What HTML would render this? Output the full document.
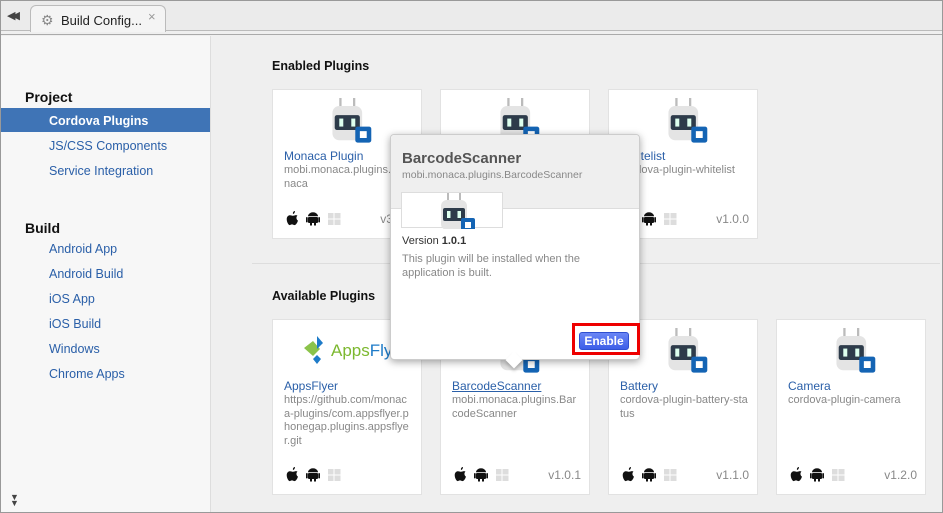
<!DOCTYPE html>
<html><head><style>
*{margin:0;padding:0;box-sizing:border-box}
body{width:943px;height:513px;overflow:hidden;font-family:"Liberation Sans",sans-serif;background:#efefef;position:relative}
.frame{position:absolute;left:0;top:0;width:943px;height:513px;border:1px solid #999;pointer-events:none;z-index:10}
.tabbar{position:absolute;left:0;top:0;width:943px;height:31px;background:#ebebeb;border-bottom:1px solid #bbb}
.tabline{position:absolute;left:0;top:34px;width:943px;height:1px;background:#aaa}
.tab{position:absolute;left:30px;top:5px;width:136px;height:27px;background:#f4f4f4;border:1px solid #bbb;border-bottom:none;border-radius:6px 6px 0 0;font-size:13px;color:#222;padding:7px 0 0 30px}
.side{position:absolute;left:1px;top:36px;width:210px;height:476px;background:#f7f7f7;border-right:1px solid #ddd}
.side h3{position:absolute;left:24px;font-size:14px;font-weight:bold;color:#111}
.side a{position:absolute;left:48px;font-size:12.5px;color:#2a5fa8}
.sel{position:absolute;left:0;top:72px;width:209px;height:24px;background:#3f74b6}
.main h2{position:absolute;font-size:12.5px;font-weight:bold;color:#111;left:272px}
.card{position:absolute;width:150px;background:#fff;border:1px solid #e2e2e2}
.card .t{position:absolute;left:11px;font-size:12px;color:#2a5fa8}
.card .d{position:absolute;left:11px;width:128px;font-size:11px;color:#888;line-height:13.5px;word-break:break-all}
.card .os{position:absolute;left:13px;bottom:12px}
.card .v{position:absolute;right:8px;bottom:12px;font-size:12px;color:#888}
.pl{position:absolute;left:57px;top:8px}
.pop{position:absolute;left:390px;top:134px;width:250px;height:226px;background:#fff;border:1px solid #ccc;border-radius:4px;box-shadow:0 2px 8px rgba(0,0,0,.35);z-index:5}
</style></head><body>
<div class="tabbar"></div><div class="tabline"></div>
<div style="position:absolute;left:7px;top:9px;font-size:11px;color:#444;letter-spacing:-4px">◀◀</div>
<div class="tab"><span style="position:absolute;left:10px;top:6px;color:#888;font-size:14px">⚙</span>Build Config...<span style="position:absolute;left:117px;top:3px;color:#999">×</span></div>
<div class="side">
<h3 style="top:53px">Project</h3>
<div class="sel"></div>
<a style="top:78px;color:#fff;font-weight:bold">Cordova Plugins</a>
<a style="top:103px">JS/CSS Components</a>
<a style="top:128px">Service Integration</a>
<h3 style="top:184px">Build</h3>
<a style="top:206px">Android App</a>
<a style="top:231px">Android Build</a>
<a style="top:256px">iOS App</a>
<a style="top:281px">iOS Build</a>
<a style="top:306px">Windows</a>
<a style="top:331px">Chrome Apps</a>
<div style="position:absolute;left:9px;top:458px;font-size:9px;color:#444;line-height:6px">▼<br>▼</div>
</div>
<div class="main">
<h2 style="top:59px">Enabled Plugins</h2>
<div style="position:absolute;left:252px;top:263px;width:688px;height:1px;background:#ddd"></div>
<h2 style="top:289px">Available Plugins</h2>
</div>
<svg width="0" height="0" style="position:absolute"><defs>
<g id="plug"><rect x="8" y="0" width="2" height="8" fill="#bbb"/><rect x="20" y="0" width="2" height="8" fill="#bbb"/><rect x="2" y="7" width="26" height="30" rx="6" fill="#e4e4e4"/><rect x="4" y="15" width="22" height="13" rx="2" fill="#2d3b4a"/><rect x="8" y="18" width="3.5" height="7" fill="#dfe"/><rect x="18.5" y="18" width="3.5" height="7" fill="#dfe"/><rect x="22" y="25" width="14" height="14" rx="2" fill="#1464b4"/><rect x="26" y="29" width="6" height="6" fill="#fff"/></g>
<g id="os"><path d="M7 3c1 0 2-1.5 2-3-1 0-2.5 1-2 3zM2 5c2-1.5 3.5-.2 5-.2s2.5-1.3 4.5-.2c-1.5 1-1.5 4 .5 5-1 3-2.5 4.5-3.5 4.5s-1.3-.7-2.5-.7-1.5.7-2.5.7C2 14-1 7.5 2 5z" fill="#111"/><g transform="translate(20,1)"><rect x="2" y="5" width="10" height="6" rx="1" fill="#111"/><path d="M2 4.3a5 4 0 0 1 10 0z" fill="#111"/><rect x="0" y="5" width="1.7" height="5.5" rx=".85" fill="#111"/><rect x="12.3" y="5" width="1.7" height="5.5" rx=".85" fill="#111"/><rect x="4" y="10" width="2" height="3.5" fill="#111"/><rect x="8" y="10" width="2" height="3.5" fill="#111"/></g><g transform="translate(42,2)" fill="#ddd"><rect x="0" y="0" width="5.5" height="5.5"/><rect x="6.5" y="0" width="6" height="5.5"/><rect x="0" y="6.5" width="5.5" height="5.5"/><rect x="6.5" y="6.5" width="6" height="5.5"/></g></g>
</defs></svg>
<!-- enabled -->
<div class="card" style="left:272px;top:89px;height:150px"><svg class="pl" width="46" height="48" viewBox="0 0 40 42"><use href="#plug"/></svg><div class="t" style="top:59px">Monaca Plugin</div><div class="d" style="top:74px">mobi.monaca.plugins.Monaca</div><svg class="os" width="60" height="15"><use href="#os"/></svg><div class="v">v3.0.0</div></div>
<div class="card" style="left:440px;top:89px;height:150px"><svg class="pl" width="46" height="48" viewBox="0 0 40 42"><use href="#plug"/></svg></div>
<div class="card" style="left:608px;top:89px;height:150px"><svg class="pl" width="46" height="48" viewBox="0 0 40 42"><use href="#plug"/></svg><div class="t" style="top:59px">Whitelist</div><div class="d" style="top:74px">cordova-plugin-whitelist</div><svg class="os" width="60" height="15"><use href="#os"/></svg><div class="v">v1.0.0</div></div>
<!-- available -->
<div class="card" style="left:272px;top:319px;height:176px"><div style="position:absolute;left:31px;top:16px;"><svg width="30" height="30"><path d="M0 12l9-7 7 8-7 7z" fill="#8bc34a"/><path d="M13 0l6 7-6 6z" fill="#1e7bc8"/><path d="M13 19l4 4-4 5-4-5z" fill="#1e7bc8"/></svg></div><div style="position:absolute;left:58px;top:21px;font-size:17px;color:#7cb82f">Apps<span style="color:#1e7bc8">Flyer</span></div><div class="t" style="top:59px">AppsFlyer</div><div class="d" style="top:74px">https://github.com/monaca-plugins/com.appsflyer.phonegap.plugins.appsflyer.git</div><svg class="os" width="60" height="15"><use href="#os"/></svg></div>
<div class="card" style="left:440px;top:319px;height:176px"><svg class="pl" width="46" height="48" viewBox="0 0 40 42"><use href="#plug"/></svg><div class="t" style="top:59px;text-decoration:underline">BarcodeScanner</div><div class="d" style="top:74px">mobi.monaca.plugins.BarcodeScanner</div><svg class="os" width="60" height="15"><use href="#os"/></svg><div class="v">v1.0.1</div></div>
<div class="card" style="left:608px;top:319px;height:176px"><svg class="pl" width="46" height="48" viewBox="0 0 40 42"><use href="#plug"/></svg><div class="t" style="top:59px">Battery</div><div class="d" style="top:74px">cordova-plugin-battery-status</div><svg class="os" width="60" height="15"><use href="#os"/></svg><div class="v">v1.1.0</div></div>
<div class="card" style="left:776px;top:319px;height:176px"><svg class="pl" width="46" height="48" viewBox="0 0 40 42"><use href="#plug"/></svg><div class="t" style="top:59px">Camera</div><div class="d" style="top:74px">cordova-plugin-camera</div><svg class="os" width="60" height="15"><use href="#os"/></svg><div class="v">v1.2.0</div></div>
<!-- popover -->
<div class="pop">
<div style="position:absolute;left:0;top:0;width:248px;height:74px;background:#efefef;border-bottom:1px solid #ddd;border-radius:4px 4px 0 0"></div>
<div style="position:absolute;left:11px;top:15px;font-size:15px;font-weight:bold;color:#555">BarcodeScanner</div>
<div style="position:absolute;left:11px;top:34px;font-size:10.5px;color:#888">mobi.monaca.plugins.BarcodeScanner</div>
<div style="position:absolute;left:10px;top:57px;width:102px;height:36px;background:#fff;border:1px solid #ddd"><svg style="position:absolute;left:37px;top:0" width="40" height="36"><use href="#plug"/></svg></div>
<div style="position:absolute;left:11px;top:100px;font-size:11px;color:#333">Version <b>1.0.1</b></div>
<div style="position:absolute;left:11px;top:117px;width:220px;font-size:11px;color:#888;line-height:14px">This plugin will be installed when the application is built.</div>
<div style="position:absolute;left:181px;top:188px;width:68px;height:32px;border:3px solid #e00"></div>
<div style="position:absolute;left:188px;top:197px;width:50px;height:18px;background:linear-gradient(#6a86f5,#3d5ee8);border:1px solid #2f4fd0;border-radius:3px;color:#fff;font-size:12px;font-weight:bold;text-align:center;line-height:16px">Enable</div>
<div style="position:absolute;left:117px;top:219px;width:12px;height:12px;background:#fff;transform:rotate(45deg);box-shadow:2px 2px 3px rgba(0,0,0,.2)"></div>
</div>
<div class="frame"></div>
</body></html>
